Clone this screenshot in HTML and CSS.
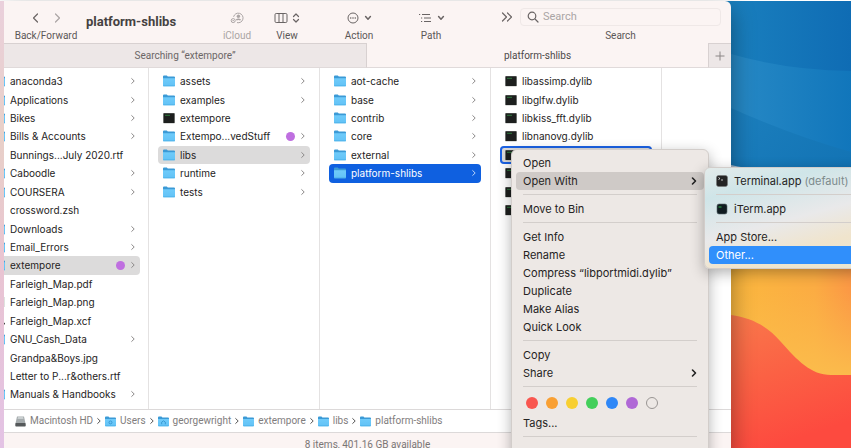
FILE: index.html
```html
<!DOCTYPE html>
<html lang="en">
<head>
<meta charset="utf-8">
<title>platform-shlibs</title>
<link rel="stylesheet" href="styles.css">
</head>
<body>
<svg class="defs" aria-hidden="true">
  <defs>
    <linearGradient id="gFolder" x1="0" y1="0" x2="0" y2="1"><stop offset="0" stop-color="#6fcbfa"/><stop offset="1" stop-color="#62c2f6"/></linearGradient>
    <symbol id="folder" viewBox="0 0 12 12"><path fill="#3b9ad6" d="M0 1.6Q0 .6 1 .6h2.8l1 1H11q1 0 1 1V5H0z"/><path fill="url(#gFolder)" d="M0 3.2h12v7.2q0 .8-.8.8H.8q-.8 0-.8-.8z"/><path fill="#49aee6" d="M0 10.4h12q0 .9-.8.9H.8q-.8 0-.8-.9z"/></symbol>
    <symbol id="exec" viewBox="0 0 12 12"><rect y="1" width="12" height="10.4" rx=".8" fill="#b9bcb9"/><rect x=".5" y="1.3" width="11" height="9.6" rx=".5" fill="#1d1f1e"/><path stroke="#2f7a3c" d="M2 3.3h5"/></symbol>
    <symbol id="chev" viewBox="0 0 6 8"><path fill="none" stroke="currentColor" stroke-linecap="round" stroke-linejoin="round" d="M1.700 1.600 4.200 4 1.700 6.400"/></symbol>
    <symbol id="down" viewBox="0 0 8 6"><path fill="none" stroke="currentColor" stroke-width="1.5" stroke-linecap="round" stroke-linejoin="round" d="m1.6 1.6 2.4 2.6 2.4-2.6"/></symbol>
    <symbol id="image" viewBox="0 0 12 12"><rect y="1" width="12" height="10" fill="#dfe3df"/></symbol>
    <symbol id="brush" viewBox="0 0 12 12"><circle cx="11.4" cy="8.6" r=".8" fill="#444"/></symbol>
  </defs>
</svg>
<main class="desktop">
  <svg class="wallpaper" viewBox="0 0 851 448" preserveAspectRatio="none" aria-hidden="true">
    <defs>
      <linearGradient id="w1" x1="0" y1="0" x2="1" y2="0"><stop offset=".5" stop-color="#1a80be"/><stop offset="1" stop-color="#0f6cb4"/></linearGradient>
      <linearGradient id="w2" x1="0" y1="0" x2="1" y2="0"><stop offset="0" stop-color="#2789c5"/><stop offset="1" stop-color="#1176bb"/></linearGradient>
      <linearGradient id="w3" x1="0" y1="0" x2="1" y2="1"><stop offset="0" stop-color="#1c7fbd"/><stop offset="1" stop-color="#1070b2"/></linearGradient>
      <linearGradient id="w4" x1="0" y1="0" x2="1" y2="0"><stop offset="0" stop-color="#fbb83f"/><stop offset=".7" stop-color="#fbac43"/><stop offset="1" stop-color="#fb9845"/></linearGradient>
      <linearGradient id="w4b" x1="0" y1="0" x2="0" y2="1"><stop offset="0" stop-color="#fbbd4c" stop-opacity="0"/><stop offset="1" stop-color="#fbbd4c"/></linearGradient>
      <linearGradient id="w5" x1="0" y1="0" x2=".3" y2="1"><stop offset="0" stop-color="#f9784b"/><stop offset=".5" stop-color="#fb6144"/><stop offset="1" stop-color="#fd4a3f"/></linearGradient>
      <linearGradient id="w6" x1="0" y1="0" x2="0" y2="1"><stop offset="0" stop-color="#ead0dc"/><stop offset=".3" stop-color="#e8d0c8"/><stop offset=".6" stop-color="#e9c4d2"/><stop offset="1" stop-color="#e3c3e5"/></linearGradient>
    </defs>
    <path fill="url(#w1)" d="M600 0h251v170H600z"/>
    <path fill="url(#w2)" d="M731 53q55 16 120 17v130H731z"/>
    <path fill="url(#w3)" d="M731 107q60 27 120 44v60H731z"/>
    <path fill="#b9cfe4" d="M731 164q14 3 24 4h96v30H731z"/>
    <path fill="url(#w4)" d="M731 210h120v238H731z"/>
    <path fill="url(#w4b)" d="M731 290h120v90H731z"/>
    <path fill="url(#w5)" d="M731 314c22 3 37 12 50 27 16 18 30 33 50 33h20v74H731z"/>
  </svg>
  <svg class="wallpaper edge" viewBox="0 0 851 448" preserveAspectRatio="none" aria-hidden="true">
    <path fill="url(#w6)" d="M0 0h8v448H0z"/>
  </svg>

  <section class="window" aria-label="platform-shlibs">
    <header class="toolbar">
      <div class="tool">
        <div class="glyphs nav">
          <button aria-label="Back"><svg width="7" height="12" viewBox="0 0 7 12"><path d="M5.5 2 1.5 6l4 4" class="line"/></svg></button>
          <button aria-label="Forward" class="dim"><svg width="7" height="12" viewBox="0 0 7 12"><path d="m1.5 2 4 4-4 4" class="line"/></svg></button>
        </div>
        <span class="label">Back/Forward</span>
      </div>
      <h1>platform-shlibs</h1>
      <button class="tool dim">
        <span class="glyphs"><svg width="14" height="12" viewBox="0 0 14 12"><g class="thin"><path d="M3.600 4.800A4.800 4.800 0 1 1 7 10.600"/><circle cx="8.400" cy="4.300" r="1.300" fill="currentColor"/><path d="M6.200 8q2.200-1.600 4.400 0" stroke-width="1.500"/><circle cx="3.200" cy="8.600" r="2"/><path d="M2.500 8.600h1.400"/></g></svg></span>
        <span class="label">iCloud</span>
      </button>
      <button class="tool">
        <span class="glyphs"><svg width="14" height="12" viewBox="0 0 14 12"><rect x="1" y="1.5" width="12" height="9" rx="1.2" class="thin"/><path class="thin" d="M5 1.5v9m4-9v9"/></svg><svg width="8" height="12" viewBox="0 0 8 12"><path class="line" d="M1.5 4.5 4 2l2.500 2.500M1.500 7.500 4 10l2.500-2.500"/></svg></span>
        <span class="label">View</span>
      </button>
      <button class="tool">
        <span class="glyphs wide"><svg width="12" height="12" viewBox="0 0 12 12"><circle cx="6" cy="6" r="5" class="thin"/><g fill="currentColor"><circle cx="3.700" cy="6" r=".8"/><circle cx="6" cy="6" r=".8"/><circle cx="8.300" cy="6" r=".8"/></g></svg><svg width="8" height="6"><use href="#down"/></svg></span>
        <span class="label">Action</span>
      </button>
      <button class="tool">
        <span class="glyphs wide"><svg width="14" height="12" viewBox="0 0 14 12"><path class="thin" d="M1 2.500h1.200M4 2.500h8M3 6h1.200M6 6h7M3 9.500h1.200M6 9.500h7"/></svg><svg width="8" height="6"><use href="#down"/></svg></span>
        <span class="label">Path</span>
      </button>
      <button class="more" aria-label="More toolbar items"><svg width="12" height="12" viewBox="0 0 12 12"><path class="line" d="m1.500 2 4 4-4 4m5-8 4 4-4 4"/></svg></button>
      <div class="tool search">
        <div class="field">
          <svg width="12" height="12" viewBox="0 0 12 12"><circle cx="5" cy="5" r="3.800" class="line"/><path class="line" d="m8 8 3 3"/></svg>
          <input id="q" type="text" placeholder="Search">
        </div>
        <label class="label" for="q">Search</label>
      </div>
    </header>

    <nav class="tabs">
      <button class="tab">Searching “extempore”</button>
      <button class="tab active">platform-shlibs</button>
      <button class="add" aria-label="New tab"><svg width="10" height="10" viewBox="0 0 10 10"><path d="M5 .5v9M.5 5h9" stroke="#8b8686"/></svg></button>
    </nav>

    <div class="browser">
      <ul class="column first">
        <li><svg class="icon"><use href="#folder"/></svg><span>anaconda3</span><svg class="chev"><use href="#chev"/></svg></li>
        <li><svg class="icon"><use href="#folder"/></svg><span>Applications</span><svg class="chev"><use href="#chev"/></svg></li>
        <li><svg class="icon"><use href="#folder"/></svg><span>Bikes</span><svg class="chev"><use href="#chev"/></svg></li>
        <li><svg class="icon"><use href="#folder"/></svg><span>Bills &amp; Accounts</span><svg class="chev"><use href="#chev"/></svg></li>
        <li><svg class="icon"></svg><span>Bunnings...July 2020.rtf</span></li>
        <li><svg class="icon"><use href="#folder"/></svg><span>Caboodle</span><svg class="chev"><use href="#chev"/></svg></li>
        <li><svg class="icon"><use href="#folder"/></svg><span>COURSERA</span><svg class="chev"><use href="#chev"/></svg></li>
        <li><svg class="icon"></svg><span>crossword.zsh</span></li>
        <li><svg class="icon"><use href="#folder"/></svg><span>Downloads</span><svg class="chev"><use href="#chev"/></svg></li>
        <li><svg class="icon"><use href="#folder"/></svg><span>Email_Errors</span><svg class="chev"><use href="#chev"/></svg></li>
        <li class="open"><svg class="icon"><use href="#folder"/></svg><span>extempore</span><i class="tag"></i><svg class="chev"><use href="#chev"/></svg></li>
        <li><svg class="icon"></svg><span>Farleigh_Map.pdf</span></li>
        <li><svg class="icon"><use href="#image"/></svg><span>Farleigh_Map.png</span></li>
        <li><svg class="icon"><use href="#brush"/></svg><span>Farleigh_Map.xcf</span></li>
        <li><svg class="icon"><use href="#folder"/></svg><span>GNU_Cash_Data</span><svg class="chev"><use href="#chev"/></svg></li>
        <li><svg class="icon"></svg><span>Grandpa&amp;Boys.jpg</span></li>
        <li><svg class="icon"></svg><span>Letter to P...r&amp;others.rtf</span></li>
        <li><svg class="icon"><use href="#folder"/></svg><span>Manuals &amp; Handbooks</span><svg class="chev"><use href="#chev"/></svg></li>
        <li><svg class="icon"></svg><span>MATESODAL_Kuhn.paul</span></li>
      </ul>
      <ul class="column">
        <li><svg class="icon"><use href="#folder"/></svg><span>assets</span><svg class="chev"><use href="#chev"/></svg></li>
        <li><svg class="icon"><use href="#folder"/></svg><span>examples</span><svg class="chev"><use href="#chev"/></svg></li>
        <li><svg class="icon"><use href="#exec"/></svg><span>extempore</span></li>
        <li><svg class="icon"><use href="#folder"/></svg><span>Extempo...vedStuff</span><i class="tag"></i><svg class="chev"><use href="#chev"/></svg></li>
        <li class="open"><svg class="icon"><use href="#folder"/></svg><span>libs</span><svg class="chev"><use href="#chev"/></svg></li>
        <li><svg class="icon"><use href="#folder"/></svg><span>runtime</span><svg class="chev"><use href="#chev"/></svg></li>
        <li><svg class="icon"><use href="#folder"/></svg><span>tests</span><svg class="chev"><use href="#chev"/></svg></li>
      </ul>
      <ul class="column">
        <li><svg class="icon"><use href="#folder"/></svg><span>aot-cache</span><svg class="chev"><use href="#chev"/></svg></li>
        <li><svg class="icon"><use href="#folder"/></svg><span>base</span><svg class="chev"><use href="#chev"/></svg></li>
        <li><svg class="icon"><use href="#folder"/></svg><span>contrib</span><svg class="chev"><use href="#chev"/></svg></li>
        <li><svg class="icon"><use href="#folder"/></svg><span>core</span><svg class="chev"><use href="#chev"/></svg></li>
        <li><svg class="icon"><use href="#folder"/></svg><span>external</span><svg class="chev"><use href="#chev"/></svg></li>
        <li class="selected"><svg class="icon"><use href="#folder"/></svg><span>platform-shlibs</span><svg class="chev"><use href="#chev"/></svg></li>
      </ul>
      <ul class="column">
        <li><svg class="icon"><use href="#exec"/></svg><span>libassimp.dylib</span></li>
        <li><svg class="icon"><use href="#exec"/></svg><span>libglfw.dylib</span></li>
        <li><svg class="icon"><use href="#exec"/></svg><span>libkiss_fft.dylib</span></li>
        <li><svg class="icon"><use href="#exec"/></svg><span>libnanovg.dylib</span></li>
        <li class="target"><svg class="icon"><use href="#exec"/></svg></li>
        <li><svg class="icon"><use href="#exec"/></svg></li>
        <li><svg class="icon"><use href="#exec"/></svg></li>
        <li><svg class="icon"><use href="#exec"/></svg></li>
      </ul>
      <div class="column"></div>
    </div>

    <nav class="path" aria-label="Path">
      <a href="#"><svg width="11" height="11" viewBox="0 0 11 11"><path fill="#a5abad" d="M2 .5h7l1.500 7H.5z"/><path fill="#c9cfd0" d="M3 1h5l.5 2H2.500z"/><rect x=".3" y="7" width="10.400" height="3.500" rx=".8" fill="#55595b"/></svg>Macintosh HD</a>
      <svg class="sep"><use href="#chev"/></svg>
      <a href="#"><svg width="11" height="11" viewBox="0 0 12 12"><use href="#folder"/><circle cx="6" cy="7" r="1.600" fill="none" stroke="#3595d0"/></svg>Users</a>
      <svg class="sep"><use href="#chev"/></svg>
      <a href="#"><svg width="11" height="11" viewBox="0 0 12 12"><use href="#folder"/><path d="M4 9V6.700l2-1.500 2 1.500V9" fill="none" stroke="#3595d0"/></svg>georgewright</a>
      <svg class="sep"><use href="#chev"/></svg>
      <a href="#"><svg width="11" height="11" viewBox="0 0 12 12"><use href="#folder"/></svg>extempore</a>
      <svg class="sep"><use href="#chev"/></svg>
      <a href="#"><svg width="11" height="11" viewBox="0 0 12 12"><use href="#folder"/></svg>libs</a>
      <svg class="sep"><use href="#chev"/></svg>
      <a href="#"><svg width="11" height="11" viewBox="0 0 12 12"><use href="#folder"/></svg>platform-shlibs</a>
    </nav>
    <footer class="status">8 items, 401.16 GB available</footer>
  </section>

  <div class="menu context" role="menu">
    <button role="menuitem">Open</button>
    <button role="menuitem" class="expanded">Open With<svg class="arrow" viewBox="0 0 8 10"><path d="m2.500 2 3 3-3 3"/></svg></button>
    <hr>
    <button role="menuitem">Move to Bin</button>
    <hr>
    <button role="menuitem">Get Info</button>
    <button role="menuitem">Rename</button>
    <button role="menuitem">Compress “libportmidi.dylib”</button>
    <button role="menuitem">Duplicate</button>
    <button role="menuitem">Make Alias</button>
    <button role="menuitem">Quick Look</button>
    <hr>
    <button role="menuitem">Copy</button>
    <button role="menuitem">Share<svg class="arrow" viewBox="0 0 8 10"><path d="m2.500 2 3 3-3 3"/></svg></button>
    <hr>
    <div class="swatches">
      <button class="red" aria-label="Red"></button>
      <button class="orange" aria-label="Orange"></button>
      <button class="yellow" aria-label="Yellow"></button>
      <button class="green" aria-label="Green"></button>
      <button class="blue" aria-label="Blue"></button>
      <button class="purple" aria-label="Purple"></button>
      <button class="none" aria-label="Grey"></button>
    </div>
    <button role="menuitem">Tags...</button>
    <hr>
  </div>

  <div class="menu submenu" role="menu">
    <button role="menuitem"><svg width="12" height="12" viewBox="0 0 12 12"><rect x=".5" y=".5" width="11" height="11" rx="2" fill="#242424" stroke="#777" stroke-width=".6"/><path d="m2.500 2.500 1.500 1-1.500 1M5 5h2" fill="none" stroke="#eee" stroke-width=".8"/></svg>Terminal.app <small>(default)</small></button>
    <hr>
    <button role="menuitem"><svg width="12" height="12" viewBox="0 0 12 12"><rect x="1" y="1" width="10" height="10" rx="2" fill="#101c20" stroke="#55646a" stroke-width=".6"/><path d="M2.500 4h3" stroke="#2fb24a"/></svg>iTerm.app</button>
    <hr>
    <button role="menuitem">App Store...</button>
    <button role="menuitem" class="highlight">Other...</button>
  </div>
</main>
</body>
</html>
```
FILE: styles.css
```css
* { box-sizing: border-box; }

body {
  margin: 0;
  font-family: Inter, "Liberation Sans", sans-serif;
  font-size: 10px;
  line-height: 16px;
  color: #252323;
}

button, input {
  margin: 0;
  padding: 0;
  border: 0;
  background: none;
  font: inherit;
  color: inherit;
}

svg { display: block; flex: none; }
.defs { position: absolute; width: 0; height: 0; }
.line { fill: none; stroke: currentColor; stroke-width: 1.2; stroke-linecap: round; stroke-linejoin: round; }
.thin { fill: none; stroke: currentColor; stroke-width: 1; }

.desktop {
  position: relative;
  height: 100vh;
  overflow: hidden;
  padding: 1px 120px 0 4px;
}
.wallpaper { position: absolute; top: 1px; left: 0; width: 100%; height: 100%; }
.wallpaper.edge { z-index: 1; clip-path: inset(0 calc(100% - 4px) 0 0); }

.window {
  position: relative;
  display: flex;
  flex-direction: column;
  height: calc(100vh + 8px);
  background: #fbf4f3;
  border-radius: 0 6px 0 0;
  overflow: hidden;
  box-shadow: 0 8px 24px rgba(0, 0, 0, .4);
}

.toolbar, .tab, .path, .status { font-family: Roboto, "Liberation Sans", sans-serif; }

.toolbar {
  display: grid;
  grid-template-columns: 80px 124px 54px 46px 98px 46px 66px 1fr;
  height: 42px;
  padding: 0 10px 0 2px;
  color: #696464;
}
.toolbar h1 {
  margin: 0;
  padding-top: 13px;
  font-size: 13px;
  line-height: 16px;
  font-weight: 700;
  color: #454141;
}
.tool {
  display: flex;
  flex-direction: column;
  align-items: center;
  padding-top: 7px;
}
.glyphs { display: flex; align-items: center; justify-content: center; gap: 4px; height: 20px; }
.glyphs.wide { gap: 5px; }
.glyphs.nav { gap: 15px; }
.glyphs button { display: block; }
.label { line-height: 16px; color: #5b5757; }
.dim, .dim .label { color: #aaa4a4; }
.more { display: flex; justify-content: flex-end; padding: 10px 7px 0 0; align-items: flex-start; }
.field {
  display: flex;
  align-items: center;
  gap: 4px;
  width: 100%;
  height: 18px;
  margin-bottom: 2px;
  padding-left: 6px;
  border: 1px solid #efe8e7;
  border-radius: 4px;
}
.field input { flex: 1; min-width: 0; font-size: 11px; outline: 0; }
.field input::placeholder { color: #aaa5a5; opacity: 1; }

.tabs {
  display: grid;
  grid-template-columns: 363fr 341fr 23px;
  height: 25px;
  flex: none;
}
.tab, .add {
  border-top: 1px solid #d8d1d1;
  border-bottom: 1px solid #e0dada;
  background: #ede7e7;
  color: #6b6666;
}
.tab.active { border-top-color: transparent; background: none; color: #4d4949; }
.tab:first-child { border-right: 1px solid #d8d1d1; }
.add { display: flex; align-items: center; justify-content: center; border-left: 1px solid #d8d1d1; }

.browser {
  display: grid;
  grid-template-columns: 145px 171px 171px 171px 1fr;
  flex: 1;
  min-height: 0;
  overflow: hidden;
  background: #fff;
}
/* Each column is one clipped row taller than the visible area. */
.column {
  display: grid;
  grid-template-rows: repeat(19, 1fr);
  height: calc(100% + 13px);
  margin: 0;
  padding: 4px 9px 0;
  border-right: 1px solid #e4e2e2;
  list-style: none;
  overflow: hidden;
}
.column:last-child { border: 0; }
.column.first { padding: 4px 8px 0 0; }
.column.first li { margin-left: -16px; }
.column li {
  display: flex;
  align-items: center;
  gap: 5px;
  min-width: 0;
  min-height: 0;
  padding: 0 4px 0 5px;
  border-radius: 4px;
  white-space: nowrap;
}
.column li span { flex: 1; }
.icon { width: 12px; height: 12px; }
.chev { width: 6px; height: 8px; color: #8d8a8a; }
.tag { width: 9px; height: 9px; border-radius: 50%; background: #bf6fe0; }
.column .open { background: #dcdbdb; }
.column .selected { background: #0f60e0; color: #fff; }
.selected .chev { color: #b9d2f8; }
.column .target { background: #dcdbdb; box-shadow: inset 0 0 0 2px #1b62e4; }

.path {
  display: flex;
  align-items: center;
  gap: 3px;
  height: 24px;
  flex: none;
  padding-left: 11px;
  border-top: 1px solid #dcd9d9;
  border-bottom: 1px solid #dcd9d9;
  background: #fff;
}
.path a { display: flex; align-items: center; gap: 4px; color: #7f7d7d; text-decoration: none; }
.sep { width: 6px; height: 8px; color: #555; }
.status { height: 24px; flex: none; line-height: 24px; text-align: center; color: #7a7676; }

.menu {
  position: absolute;
  z-index: 2;
  padding: 4px;
  border: 1px solid #d2cdca;
  border-radius: 6px;
  background: #ede8e5;
  font-size: 11px;
  box-shadow: 0 4px 14px rgba(0, 0, 0, .3);
}
.menu > button {
  display: flex;
  align-items: center;
  width: 100%;
  height: 18px;
  padding-left: 7px;
  border-radius: 4px;
  text-align: left;
  white-space: nowrap;
}
.menu hr { height: 1px; margin: 4px 7px 5px; border: 0; background: #d3cecb; }
.context { top: 149px; left: 511px; width: 198px; height: 340px; }
.menu .expanded { background: #cfcac7; }
.arrow { width: 8px; height: 10px; margin-left: auto; margin-right: 6px; }
.arrow path { fill: none; stroke: #222; stroke-width: 1.6; stroke-linecap: round; stroke-linejoin: round; }
.swatches { display: flex; gap: 8px; padding: 5px 10px; }
.swatches button { width: 12px; height: 12px; border-radius: 50%; }
.red { background: #f9564f; }
.orange { background: #f9a033; }
.yellow { background: #f8cf31; }
.green { background: #43cf5b; }
.blue { background: #2f87f7; }
.purple { background: #b068d6; }
.swatches .none { border: 1px solid #999593; }

.submenu {
  top: 167px;
  left: 704px;
  width: 160px;
  background: linear-gradient(165deg, #e3ebea 0%, #cfe5e8 22%, #e9e9ea 52%, #f0e4cc 75%, #ebe6d0 100%);
}
.submenu svg { margin-right: 6px; }
.submenu small { margin-left: 3px; font-size: 11px; color: #7d8a8c; }
.menu .highlight { background: #308ffb; color: #fff; }
```
